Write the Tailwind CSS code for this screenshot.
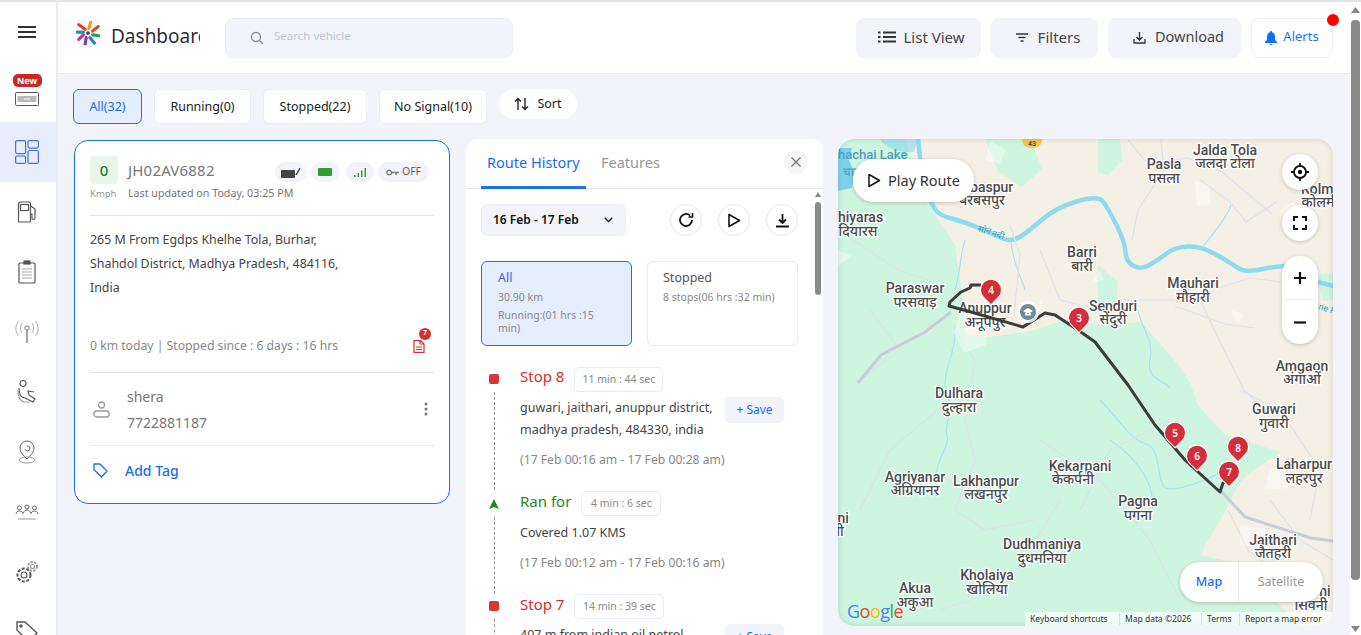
<!DOCTYPE html>
<html lang="en">
  <head>
    <meta charset="UTF-8" />
    <meta name="viewport" content="width=device-width, initial-scale=1.0" />
    <title>Dashboard</title>
    <script src="https://cdn.jsdelivr.net/npm/@tailwindcss/browser@4"></script>
  </head>
  <body class="relative h-[635px] w-[1361px] overflow-hidden bg-white font-['Noto_Sans',sans-serif] text-[#333]">
    <div class="flex h-[635px] border-t-2 border-[#e4e4e4]">
      <!-- Sidebar -->
      <aside class="flex w-[58px] shrink-0 flex-col overflow-hidden border-r-2 border-[#e9ebf2] bg-white">
        <div class="flex h-[60px] shrink-0 items-center justify-center pr-[2px]">
          <svg width="18" height="12" viewBox="0 0 18 12" fill="none" stroke="#333" stroke-width="1.800"><path d="M0 1h18M0 6h18M0 11h18"/></svg>
        </div>
        <div class="flex h-[60px] shrink-0 flex-col items-center pr-[2px]">
          <span class="mt-[12px] flex h-[13px] w-[29px] items-center justify-center rounded-[5px] bg-[#c62828] text-[9px] font-bold text-white">New</span>
          <svg class="mt-[5px]" width="24" height="14" viewBox="0 0 24 14" fill="none" stroke="#555"><rect x=".5" y=".5" width="23" height="13" rx="1"/><rect x="2.500" y="4" width="19" height="6" fill="#bbb" stroke="none"/><path d="M9 7h6" stroke="#fff"/></svg>
        </div>
        <div class="flex h-[60px] shrink-0 items-center justify-center bg-[#e8edfc] pr-[2px]">
          <svg width="24" height="24" viewBox="0 0 24 24" fill="none" stroke="#4a6fe0" stroke-width="1.200"><rect x=".6" y=".6" width="10" height="13" rx="1.500"/><rect x="13" y=".6" width="10.400" height="7.500" rx="1.500"/><rect x=".6" y="16" width="10" height="7.400" rx="1.500"/><rect x="13" y="10.500" width="10.400" height="12.900" rx="1.500"/></svg>
        </div>
        <div class="flex h-[60px] shrink-0 items-center justify-center pr-[2px]">
          <svg width="20" height="22" viewBox="0 0 20 22" fill="none" stroke="#555" stroke-width="1.200"><path d="M1.500 21V3a2 2 0 0 1 2-2h8a2 2 0 0 1 2 2v18z"/><rect x="3.500" y="3.500" width="8" height="6"/><path d="M14 5l4 3v9a1.500 1.500 0 0 1-3 0v-4h-1.500"/></svg>
        </div>
        <div class="flex h-[60px] shrink-0 items-center justify-center pr-[2px]">
          <svg width="18" height="24" viewBox="0 0 18 24" fill="none" stroke="#555" stroke-width="1.200"><rect x="1" y="3" width="16" height="20" rx="1"/><rect x="6" y="1" width="6" height="3" fill="#555"/><path d="M4 9h10M4 12h10M4 15h10M4 18h10" stroke="#aaa"/></svg>
        </div>
        <div class="flex h-[60px] shrink-0 items-center justify-center pr-[2px]">
          <svg width="24" height="24" viewBox="0 0 24 24" fill="none" stroke="#777" stroke-width="1"><circle cx="12" cy="8" r="2.200"/><path d="M12 10v13" stroke-width="1.300"/><path d="M7 3c-2 3-2 7 0 10M17 3c2 3 2 7 0 10M3.500 1c-3.500 5-3.500 10 0 15M20.500 1c3.500 5 3.500 10 0 15" stroke="#aaa"/></svg>
        </div>
        <div class="flex h-[60px] shrink-0 items-center justify-center pr-[2px]">
          <svg width="20" height="24" viewBox="0 0 20 24" fill="none" stroke="#555" stroke-width="1.200"><circle cx="6" cy="3.500" r="3"/><path d="M2 8c0 6 2 10 6 10l8 4 2-3-6-4-1-4 6 1"/><path d="M1 10c0 7 2 11 6 12h6" stroke="#999"/></svg>
        </div>
        <div class="flex h-[60px] shrink-0 items-center justify-center pr-[2px]">
          <svg width="18" height="24" viewBox="0 0 18 24" fill="none" stroke="#666" stroke-width="1"><path d="M9 19C5 15 2 12 2 8a7 7 0 0 1 14 0c0 4-3 7-7 11z"/><path d="M7 9a2.500 2.500 0 1 0 2-3"/><ellipse cx="9" cy="20" rx="8" ry="3" stroke="#999"/></svg>
        </div>
        <div class="flex h-[60px] shrink-0 items-center justify-center pr-[2px]">
          <svg width="24" height="16" viewBox="0 0 24 16" fill="none" stroke="#666" stroke-width="1"><circle cx="4.500" cy="4" r="2"/><circle cx="12" cy="3" r="2"/><circle cx="19.500" cy="4" r="2"/><path d="M1 10c0-2 2-3 3.500-3S8 8 8 10M8.500 9c0-2 2-3 3.500-3s3.500 1 3.500 3M16 10c0-2 2-3 3.500-3S23 8 23 10"/><path d="M3 15h18" stroke="#999"/></svg>
        </div>
        <div class="flex h-[60px] shrink-0 items-center justify-center pr-[2px]">
          <svg width="24" height="24" viewBox="0 0 24 24" fill="none" stroke="#555" stroke-width="1.100"><circle cx="9" cy="15" r="3"/><circle cx="9" cy="15" r="6.500" stroke-dasharray="3 1.600" stroke-width="2"/><circle cx="17.500" cy="6.500" r="2" stroke="#999"/><circle cx="17.500" cy="6.500" r="4.500" stroke="#999" stroke-dasharray="2.500 1.200" stroke-width="1.800"/></svg>
        </div>
        <div class="flex h-[60px] shrink-0 items-center justify-center pr-[2px]">
          <svg width="22" height="22" viewBox="0 0 22 22" fill="none" stroke="#555" stroke-width="1.400"><path d="M1 3V1h8l12 11-8 9L1 9z" stroke-linejoin="round"/><circle cx="5" cy="5" r="1"/></svg>
        </div>
      </aside>

      <!-- Main -->
      <main class="flex h-[633px] w-[1292px] shrink-0 flex-col overflow-hidden bg-[#f2f4fa]">
        <header class="relative flex h-[72px] shrink-0 items-center border-b border-[#e9ebf2] bg-white">
          <div class="ml-[15px] flex h-[30px] w-[30px] -translate-y-[5px] items-center justify-center rounded-full bg-[#fafafa]">
            <svg width="24" height="24" viewBox="-13 -13 26 26" fill="none" stroke-width="3.400" stroke-linecap="round">
              <path d="M-3-4L-10-9" stroke="#e63b2e"/><path d="M1-5L3-12" stroke="#f39c12"/><path d="M5-2L11-7" stroke="#d84a3a"/><path d="M5 2L12 3" stroke="#2e9e5b"/><path d="M2 5L7 11" stroke="#2b7fc4"/><path d="M-2 5L-3 12" stroke="#7b3fa0"/><path d="M-5 2L-10 7" stroke="#c2398f"/><path d="M-5-1L-12-1" stroke="#1f8fb5"/><circle r="2" fill="#444" stroke="none"/>
            </svg>
          </div>
          <div class="ml-[8px] w-[89px] -translate-y-px overflow-hidden whitespace-nowrap text-[19px] text-[#2b2f38]">Dashboard</div>
          <div class="ml-[25px] flex h-[40px] w-[288px] items-center rounded-[8px] border border-[#eceef5] bg-[#f2f4f9]">
            <svg class="ml-[24px]" width="14" height="14" viewBox="0 0 14 14" fill="none" stroke="#8b8f98" stroke-width="1.400"><circle cx="6" cy="6" r="4.500"/><path d="M9.500 9.500L13 13"/></svg>
            <span class="ml-[10px] -translate-y-[2px] text-[11.500px] text-[#c3c6ce]">Search vehicle</span>
          </div>
          <div class="ml-[343px] flex h-[40px] w-[125px] items-center justify-center gap-[7px] rounded-[8px] bg-[#f2f4f9] pb-[1px] pl-[6px] text-[15px] text-[#444]">
            <svg width="18" height="12" viewBox="0 0 18 12" fill="none" stroke="#333" stroke-width="2"><path d="M0 1.500h2.500M5 1.500h13M0 6h2.500M5 6h13M0 10.500h2.500M5 10.500h13"/></svg>List View
          </div>
          <div class="ml-[10px] flex h-[40px] w-[107px] items-center justify-center gap-[9px] rounded-[8px] bg-[#f2f4f9] pb-[1px] pl-[6px] text-[15px] text-[#444]">
            <svg width="14" height="9" viewBox="0 0 14 9" fill="none" stroke="#333" stroke-width="1.400"><path d="M1 1h12M3.500 4.500h7M5.500 8h3"/></svg>Filters
          </div>
          <div class="ml-[10px] flex h-[40px] w-[133px] items-center justify-center gap-[9px] rounded-[8px] bg-[#f2f4f9] pb-[1px] pl-[8px] text-[14.500px] text-[#444]">
            <svg width="13" height="13" viewBox="0 0 13 13" fill="none" stroke="#333" stroke-width="1.300"><path d="M6.500 1v7.500M3.500 6l3 3 3-3M1 8v4h11V8"/></svg>Download
          </div>
          <div class="ml-[10px] flex h-[40px] w-[82px] items-center justify-center gap-[6px] rounded-[8px] border border-[#eceef5] bg-white text-[13px] text-[#1a73f0]">
            <svg width="12" height="14" viewBox="0 0 12 14" fill="#0d6efd"><path d="M6 0a1 1 0 0 1 1 1.200C9 1.700 10 3.500 10 6v3l2 2v1H0v-1l2-2V6c0-2.500 1-4.300 3-4.800A1 1 0 0 1 6 0zM4.500 13h3a1.500 1 0 0 1-3 0z"/></svg><span class="-translate-y-px">Alerts</span>
          </div>
          <span class="absolute left-[1267px] top-[10px] h-[16px] w-[16px] rounded-full border-[2px] border-white bg-[#ff0000]"></span>
        </header>

        <div class="ml-[15px] mt-[15px] flex h-[35px] shrink-0 items-start gap-[12px] text-[12.500px]">
          <div class="flex h-[35px] w-[69px] items-center justify-center rounded-[6px] border border-[#1a73e8] bg-[#e5eefc] pt-px text-[#1a6cf0]">All(32)</div>
          <div class="flex h-[35px] w-[97px] items-center justify-center rounded-[6px] border border-[#eceef5] bg-white pt-px text-[#222]">Running(0)</div>
          <div class="flex h-[35px] w-[104px] items-center justify-center rounded-[6px] border border-[#eceef5] bg-white pt-px text-[#222]">Stopped(22)</div>
          <div class="flex h-[35px] w-[108px] items-center justify-center rounded-[6px] border border-[#eceef5] bg-white pt-px text-[#222]">No Signal(10)</div>
          <div class="flex h-[30px] w-[78px] items-center justify-center gap-[8px] rounded-[15px] bg-white text-[#222]">
            <svg width="15" height="14" viewBox="0 0 15 14" fill="none" stroke="#222" stroke-width="1.400"><path d="M4 13V1.500M1 4.500l3-3 3 3M11 1v11.500M8 9.500l3 3 3-3"/></svg>Sort
          </div>
        </div>

        <div class="ml-[16px] mt-[15px] flex min-h-0 flex-1 items-start">
          <!-- Vehicle card -->
          <section class="mt-[1px] h-[364px] w-[376px] shrink-0 rounded-[14px] border border-[#1a73e8] bg-white px-[15px] pt-[15px]">
            <div class="flex h-[60px] border-b border-[#e4e4e4]">
              <div class="flex w-[38px] shrink-0 flex-col">
                <div class="flex h-[28px] w-[28px] items-center justify-center rounded-[3px] bg-[#e8f5e9] text-[15px] font-medium text-[#2e7d32]">0</div>
                <div class="mt-[3px] text-[9.500px] text-[#999]">Kmph</div>
              </div>
              <div class="flex w-[147px] shrink-0 flex-col">
                <div class="h-[28px] text-[15px] leading-[28px] tracking-[.2px] text-[#777]">JH02AV6882</div>
                <div class="mt-[1px] whitespace-nowrap text-[10.700px] text-[#777]">Last updated on Today, 03:25 PM</div>
              </div>
              <div class="mt-[6px] flex h-[20px] items-center text-[10.500px] text-[#666]">
                <div class="flex h-[20px] w-[32px] items-center justify-center rounded-full bg-[#f2f4f9]"><svg width="20" height="11" viewBox="0 0 20 11" fill="none"><rect y="3" width="14" height="8" rx="1" fill="#444"/><path d="M15 8l4-7" stroke="#444" stroke-width="1.500"/></svg></div>
                <div class="ml-[4px] flex h-[20px] w-[28px] items-center justify-center rounded-full bg-[#f2f4f9]"><svg width="15" height="8" viewBox="0 0 15 8"><rect width="14" height="8" rx="1" fill="#2e9e2e"/></svg></div>
                <div class="ml-[7px] flex h-[20px] w-[28px] items-center justify-center rounded-full bg-[#f2f4f9]"><svg width="13" height="9" viewBox="0 0 13 9" fill="#3c9a3c"><rect y="7" width="1.500" height="2"/><rect x="3.500" y="5" width="1.500" height="4"/><rect x="7" y="2.500" width="1.500" height="6.500"/><rect x="10.500" width="1.500" height="9"/></svg></div>
                <div class="ml-[4px] flex h-[20px] w-[51px] items-center justify-center gap-[3px] rounded-full bg-[#f2f4f9]"><svg width="13" height="7" viewBox="0 0 13 7" fill="none" stroke="#777" stroke-width="1.300"><circle cx="3.200" cy="3.500" r="2.300"/><path d="M5.500 3.500H13M10 3.500V6"/></svg>OFF</div>
              </div>
            </div>
            <div class="mt-[12px] text-[12.400px] leading-[24px] text-[#444]">265 M From Egdps Khelhe Tola, Burhar,<br />Shahdol District, Madhya Pradesh, 484116,<br />India</div>
            <div class="mt-[36px] flex h-[20px] items-center justify-between text-[12.200px] text-[#888]">
              <span>0 km today | Stopped since : 6 days : 16 hrs</span>
              <span class="relative mr-[9px]">
                <svg class="block" width="12" height="13" viewBox="0 0 12 13" fill="none" stroke="#d32f2f" stroke-width="1.200"><path d="M1 .6h6.500L11 4v8.400H1zM3 7h6M3 9.500h6M7 .6V4h4"/></svg>
                <span class="absolute left-[6px] top-[-12px] flex h-[12px] w-[12px] items-center justify-center rounded-full bg-[#d32f2f] text-[7px] font-bold text-white">7</span>
              </span>
            </div>
            <div class="mt-[16px] flex h-[74px] items-center border-y border-t-[#e4e4e4] border-b-[#e8ebf5]">
              <svg class="ml-[3px]" width="17" height="17" viewBox="0 0 17 17" fill="none" stroke="#999" stroke-width="1.300"><circle cx="8.500" cy="4" r="3"/><rect x=".8" y="10" width="15.400" height="6" rx="3"/></svg>
              <div class="ml-[17px] pt-[2px] text-[14px] leading-[26px] text-[#777]">shera<br />7722881187</div>
              <svg class="ml-auto mr-[6px]" width="4" height="14" viewBox="0 0 4 14" fill="#777"><circle cx="2" cy="2" r="1.500"/><circle cx="2" cy="7" r="1.500"/><circle cx="2" cy="12" r="1.500"/></svg>
            </div>
            <div class="mt-[12px] flex h-[24px] items-center text-[14px] font-medium text-[#1a6cf0]">
              <svg class="ml-[3px]" width="15" height="15" viewBox="0 0 15 15" fill="none" stroke="#1a6cf0" stroke-width="1.300"><path d="M1 1h6l7 7-5.500 6L1 6.500z" stroke-linejoin="round"/></svg>
              <span class="ml-[17px]">Add Tag</span>
            </div>
          </section>

          <!-- Route panel -->
          <section class="relative ml-[16px] h-[497px] w-[357px] shrink-0 overflow-hidden rounded-t-[12px] bg-white">
            <div class="relative flex h-[50px] border-b border-[#e6e6ea] pl-[15px]">
              <div class="h-[50px] w-[105px] border-b-[3px] border-[#1a73e8] pl-[6px] text-[14.500px] leading-[47px] text-[#1a6cf0]">Route History</div>
              <div class="ml-[15px] text-[14.500px] leading-[47px] text-[#999]">Features</div>
              <div class="absolute left-[318px] top-[11px] flex h-[24px] w-[24px] items-center justify-center rounded-full bg-[#f5f5f7]">
                <svg width="10" height="10" viewBox="0 0 10 10" stroke="#777" stroke-width="1.400"><path d="M.5.5l9 9M9.500.5l-9 9"/></svg>
              </div>
            </div>
            <div class="px-[15px]">
              <div class="mt-[15px] flex items-center">
                <div class="flex h-[32px] w-[145px] items-center justify-between rounded-[6px] border border-[#eceef5] bg-[#f2f4f9] pl-[11px] pr-[12px] text-[12px] font-semibold text-[#111]">16 Feb - 17 Feb<svg width="9" height="6" viewBox="0 0 9 6" fill="none" stroke="#222" stroke-width="1.400"><path d="M.7.7L4.500 4.500 8.300.7"/></svg></div>
                <div class="ml-[44px] flex h-[32px] w-[32px] items-center justify-center rounded-full border border-[#e5e5e5]"><svg width="16" height="16" viewBox="0 0 16 16" fill="none" stroke="#111" stroke-width="1.800"><path d="M14 8a6 6 0 1 1-2-4.500"/><path d="M14.500 1v4h-4" stroke-width="1.600"/></svg></div>
                <div class="ml-[16px] flex h-[32px] w-[32px] items-center justify-center rounded-full border border-[#e5e5e5]"><svg width="14" height="15" viewBox="0 0 14 15" fill="none" stroke="#111" stroke-width="1.600"><path d="M2 1.500v12l10.500-6z" stroke-linejoin="round"/></svg></div>
                <div class="ml-[16px] flex h-[32px] w-[32px] items-center justify-center rounded-full border border-[#e5e5e5]"><svg width="15" height="15" viewBox="0 0 15 15" fill="none" stroke="#111" stroke-width="1.800"><path d="M7.500 1v8.500M4 6.500l3.500 3.500L11 6.500M1 13.500h13"/></svg></div>
              </div>
              <div class="mt-[25px] flex gap-[15px]">
                <div class="h-[85px] w-[151px] rounded-[6px] border border-[#1a73e8] bg-[#e5eefc] pl-[16px] pt-[6px] text-[10.500px] leading-[13px] text-[#888]">
                  <div class="text-[12.500px] leading-[20px] text-[#4a5ce0]">All</div>
                  <div class="leading-[18px]">30.90 km</div>
                  <div class="mt-[3px]">Running:(01 hrs :15<br />min)</div>
                </div>
                <div class="h-[85px] w-[151px] rounded-[6px] border border-[#e8ebf5] bg-white pl-[15px] pt-[6px] text-[10.500px] text-[#888]">
                  <div class="text-[12.500px] leading-[20px] text-[#555]">Stopped</div>
                  <div class="whitespace-nowrap leading-[18px]">8 stops(06 hrs :32 min)</div>
                </div>
              </div>

              <div class="mt-[21px]">
                <div class="flex">
                  <div class="flex w-[26px] shrink-0 flex-col items-center">
                    <span class="mt-[7px] h-[10px] w-[10px] rounded-[2px] bg-[#d63838]"></span>
                    <span class="mb-[1px] mt-[8px] flex-1 border-l border-dashed border-[#999]"></span>
                  </div>
                  <div class="ml-[13px] flex-1 pb-[21px]">
                    <div class="flex h-[25px] items-center gap-[10px]">
                      <span class="-translate-y-[3px] text-[15px] text-[#d32f2f]">Stop 8</span>
                      <span class="flex h-[25px] w-[89px] items-center justify-center rounded-[5px] border border-[#e8ebf5] text-[10.500px] text-[#888]">11 min : 44 sec</span>
                    </div>
                    <div class="mt-[5px] flex items-start justify-between pr-[24px]">
                      <div class="text-[12.500px] leading-[22px] text-[#444]">guwari, jaithari, anuppur district,<br />madhya pradesh, 484330, india</div>
                      <span class="flex h-[26px] w-[59px] shrink-0 items-center justify-center rounded-[5px] bg-[#f2f4f9] text-[12px] text-[#1a6cf0]">+ Save</span>
                    </div>
                    <div class="mt-[9px] text-[12.200px] leading-[20px] text-[#888]">(17 Feb 00:16 am - 17 Feb 00:28 am)</div>
                  </div>
                </div>
                <div class="flex">
                  <div class="flex w-[26px] shrink-0 flex-col items-center">
                    <svg class="mt-[8px]" width="10" height="10" viewBox="0 0 10 10" fill="#1e8a1e"><path d="M5 0l5 10-5-2-5 2z"/></svg>
                    <span class="mt-[8px] flex-1 border-l border-dashed border-[#999]"></span>
                  </div>
                  <div class="ml-[13px] flex-1 pb-[21px]">
                    <div class="flex h-[25px] items-center gap-[10px]">
                      <span class="-translate-y-[2px] text-[15px] text-[#1e8a1e]">Ran for</span>
                      <span class="flex h-[25px] w-[80px] items-center justify-center rounded-[5px] border border-[#e8ebf5] text-[10.500px] text-[#888]">4 min : 6 sec</span>
                    </div>
                    <div class="mt-[6px] text-[12.500px] leading-[22px] text-[#444]">Covered 1.07 KMS</div>
                    <div class="mt-[9px] text-[12.200px] leading-[20px] text-[#888]">(17 Feb 00:12 am - 17 Feb 00:16 am)</div>
                  </div>
                </div>
                <div class="flex">
                  <div class="flex w-[26px] shrink-0 flex-col items-center">
                    <span class="mt-[7px] h-[10px] w-[10px] rounded-[2px] bg-[#d63838]"></span>
                    <span class="mt-[8px] h-[40px] border-l border-dashed border-[#999]"></span>
                  </div>
                  <div class="ml-[13px] flex-1">
                    <div class="flex h-[25px] items-center gap-[10px]">
                      <span class="-translate-y-[2px] text-[15px] text-[#d32f2f]">Stop 7</span>
                      <span class="flex h-[25px] w-[90px] items-center justify-center rounded-[5px] border border-[#e8ebf5] text-[10.500px] text-[#888]">14 min : 39 sec</span>
                    </div>
                    <div class="mt-[5px] flex items-start justify-between pr-[24px]">
                      <div class="text-[12.500px] leading-[22px] text-[#444]">407 m from indian oil petrol</div>
                      <span class="flex h-[26px] w-[59px] shrink-0 items-center justify-center rounded-[5px] bg-[#f2f4f9] text-[12px] text-[#1a6cf0]">+ Save</span>
                    </div>
                  </div>
                </div>
              </div>
            </div>
            <!-- panel scrollbar -->
            <div class="absolute left-[349px] top-[51px] h-[446px] w-[8px] bg-white">
              <svg class="absolute left-0 top-[2px]" width="6" height="5" viewBox="0 0 6 5" fill="#888"><path d="M3 0l3 5H0z"/></svg>
              <div class="absolute left-0 top-[12px] h-[93px] w-[6px] rounded-full bg-[#8a8a8a]"></div>
            </div>
          </section>

          <!-- Map canvas -->
          <section class="relative ml-[15px] h-[487px] w-[495px] shrink-0 overflow-hidden rounded-[16px] bg-[#f5f0e5]">
            <svg class="absolute inset-0" width="495" height="487" viewBox="838 139 495 487">
              <rect x="838" y="139" width="495" height="487" fill="#f5f0e5"/>
              <path d="M838 139H905L925 200 955 245 961 285 965 335 990 337 1035 330 1070 318 1098 325 1141 322 1181 368 1191 385 1198 405 1225 435 1281 452 1251 472 1238 485 1225 512 1205 545 1201 555 1230 562 1280 605 1300 626H838z" fill="#cdf5e0"/>
              <path d="M985 139h45l12 30-20 18-24-16z" fill="#cdf5e0"/>
              <path d="M1098 139h22l2 22-14 14-10-2z" fill="#cdf5e0"/>
              <path d="M1098 265l20 17-2 22-18 11z" fill="#cdf5e0"/>
              <path d="M1318 275l15-3v28l-10 1z" fill="#cdf5e0"/>
              <!-- lake and rivers -->
              <path d="M838 148h14l-3 12 6 14-3 14-14 3z" fill="#7dd3ec"/>
              <path d="M880 139c6 10 20 14 34 13l4-13z" fill="#7dd3ec" opacity=".5"/>
              <path d="M918 139L921 165 920 183Q931 202 934.500 208.500Q938 215 951.500 218.500Q965 222 980 228.500Q995 235 1003 238.500Q1011 242 1019.500 237Q1028 232 1041.500 220Q1055 208 1076.500 201.500Q1098 195 1103 201.500Q1108 208 1116.500 225Q1125 242 1125.500 252Q1126 262 1133.500 266Q1141 270 1149.500 265Q1158 260 1166.500 253.500Q1175 247 1188 246.500Q1201 246 1216 254.500Q1231 263 1238 268Q1245 273 1263 269Q1281 265 1300 266M1318 282l15 4" fill="none" stroke="#8fdbee" stroke-width="4.500" stroke-linecap="round"/>
              <g fill="none" stroke="#a8e2f2" stroke-width="1.200">
                <path d="M1011 242c2 20 8 30 14 48M965 240c-6 20-4 30-10 50M1231 205c-4 14-20 30-28 42M1138 310c4 20 16 30 12 50s14 20 20 28"/>
                <path d="M955 325c2 30-16 50-8 70s-4 30 0 40-14 30-10 44M1110 440c30 20 50 50 40 80M1100 400c20 20 30 40 46 44s10 40 20 44 50-10 60-20"/>
              </g>
              <!-- minor roads -->
              <g fill="none" stroke="#dde2ea" stroke-width="1.200">
                <path d="M1160 130l4 40-26 40-6 30M1200 180l30 22 16 20 30-20M1120 300h60l70-22 80 10M1200 300l24 50 20 40 30 30M1128 140l20 24 40-6 34 14 50 42M1175 306l50 18 30 4M1010 225l10 30-6 60M1040 250l20 50 40 10"/>
                <path d="M838 230l60 40 30 10M870 310l30 40-40 30M955 330l20 30-10 60 10 40-20 50 30 20 50-10M950 400l-60 50-30 60M1040 440l60 40 50 60 30 60M1060 500l-30 50-30 40-60 20M1170 420l-60 30-30 60M1240 390l40 20 40 60-10 50M1270 500l30 40 33 20M1228 510l20 40 50 40"/>
              </g>
              <!-- settlements -->
              <g fill="#fff" opacity=".4">
                <path d="M990 140l16 10-6 14-14-4z"/><path d="M1195 180l14 6 2 18-14 2zM1280 210l14-8 8 14-16 10zM1230 310l14 4-6 10zM960 305l30 4-4 36-22 8-10-20zM1100 270l4 10-14 4zM1040 300l6 8-10 4zM1270 470l30 4-10 14-26 2zM1240 525l40 6-10 20-30-6zM838 250l14 6-14 10z"/>
              </g>
              <!-- highways -->
              <path d="M858 383l23-28 44-23 26-20" fill="none" stroke="#c5cdd9" stroke-width="3"/>
              <path d="M1220 490l25 27 66 21 22 3" fill="none" stroke="#c5cdd9" stroke-width="3"/>
              <path d="M1022 139c0 6 4 9 10 9s10-3 10-9z" fill="#f3c94b"/>
              <!-- labels -->
              <g transform="translate(0,-1)" class="font-[Roboto,'Noto_Sans',sans-serif] text-[14px] font-medium fill-[#4b4b4b] stroke-white stroke-[2.500px] [paint-order:stroke]" text-anchor="middle">
                <text x="1225" y="156">Jalda Tola</text><text x="1225" y="169">जलदा टोला</text>
                <text x="1164" y="170">Pasla</text><text x="1164" y="184">पसला</text>
                <text x="981" y="193">Barbaspur</text><text x="982" y="206">बरबसपुर</text>
                <text x="856" y="223">Dhiyaras</text><text x="858" y="237">दियारस</text>
                <text x="915" y="294">Paraswar</text><text x="915" y="308">परसवाड़</text>
                <text x="985" y="314">Anuppur</text><text x="985" y="328">अनूपपुर</text>
                <text x="1082" y="258">Barri</text><text x="1082" y="272">बारी</text>
                <text x="1113" y="312">Senduri</text><text x="1113" y="325">सेंदुरी</text>
                <text x="1193" y="289">Mauhari</text><text x="1193" y="303">मौहारी</text>
                <text x="1302" y="372">Amgaon</text><text x="1302" y="385">अंगाओं</text>
                <text x="1319" y="195">Kolmi</text><text x="1320" y="208">कोलमी</text>
                <text x="1274" y="415">Guwari</text><text x="1274" y="429">गुवारी</text>
                <text x="1304" y="470">Laharpur</text><text x="1304" y="484">लहरपुर</text>
                <text x="1273" y="546">Jaithari</text><text x="1273" y="559">जैतहरी</text>
                <text x="959" y="399">Dulhara</text><text x="959" y="413">दुल्हारा</text>
                <text x="915" y="483">Agriyanar</text><text x="915" y="496">अग्रियानर</text>
                <text x="986" y="487">Lakhanpur</text><text x="986" y="500">लखनपुर</text>
                <text x="1080" y="472">Kekarpani</text><text x="1073" y="485">केकर्पनी</text>
                <text x="1138" y="507">Pagna</text><text x="1138" y="521">पगना</text>
                <text x="1042" y="550">Dudhmaniya</text><text x="1042" y="564">दुधमनिया</text>
                <text x="987" y="581">Kholaiya</text><text x="987" y="595">खोलिया</text>
                <text x="915" y="594">Akua</text><text x="915" y="608">अकुआ</text>
                <text x="835" y="524">Rani</text><text x="838" y="537">नी</text>
                <text x="1313" y="597">Seoni</text><text x="1311" y="611">सिवनी</text>
              </g>
              <text x="838" y="159" class="font-[Roboto,sans-serif] text-[13px] font-medium fill-[#4aa0bf]">hachai Lake</text>
              <text x="843" y="176" class="font-[Roboto,sans-serif] text-[12px] fill-[#4aa0bf]">चाच</text>
              <text x="977" y="231" transform="rotate(18 977 231)" class="font-[Roboto,sans-serif] text-[9px] fill-[#3a9cc0]">सोन नदी</text>
              <text x="1318" y="309" transform="rotate(18 1318 309)" class="font-[Roboto,sans-serif] text-[9px] fill-[#3a9cc0]">ne R</text>
              <text x="1032" y="146" text-anchor="middle" class="font-[Roboto,sans-serif] text-[7px] font-bold fill-[#555]">43</text>
              <!-- route -->
              <path d="M981 285H971L970 288 961 292 950 302 949 306 971 312 1023 327 1045 313 1055 315 1078 330 1095 342 1128 385 1155 425 1185 460 1220 492 1223 483 1228 480" fill="none" stroke="#3c3c3c" stroke-width="3" stroke-linejoin="round"/>
              <circle cx="1028" cy="312" r="11" fill="#fff" opacity=".8"/><circle cx="1028" cy="312" r="8" fill="#6f8a9a"/>
              <path d="M1023 311l5-3 5 3-5 3zM1025 313v2.500h6V313" fill="#fff"/>
              <!-- pins -->
              <g fill="#d32f3a" stroke="#fff" stroke-width="2" class="[paint-order:stroke]">
                <path d="M991 304l-7-7a10 10 0 1 1 14 0z"/>
                <path d="M1079 332l-7-7a10 10 0 1 1 14 0z"/>
                <path d="M1175 447l-7-7a10 10 0 1 1 14 0z"/>
                <path d="M1197 470l-7-7a10 10 0 1 1 14 0z"/>
                <path d="M1238 461l-7-7a10 10 0 1 1 14 0z"/>
                <path d="M1229 486l-7-7a10 10 0 1 1 14 0z"/>
              </g>
              <g class="font-['Noto_Sans',sans-serif] text-[10px] font-semibold fill-white" text-anchor="middle">
                <text x="991" y="294">4</text><text x="1079" y="322">3</text><text x="1175" y="437">5</text><text x="1197" y="460">6</text><text x="1238" y="452">8</text><text x="1229" y="476">7</text>
              </g>
            </svg>
            <div class="pointer-events-none absolute inset-0 rounded-[16px] shadow-[inset_0_0_6px_rgba(0,0,0,.12)]"></div>

            <!-- Play route, controls -->
            <div class="absolute left-[15px] top-[20px] flex h-[43px] w-[121px] items-center justify-center gap-[7px] rounded-[21px] bg-white text-[14.500px] text-[#333] shadow-[0_1px_4px_rgba(0,0,0,.2)]">
              <svg width="14" height="15" viewBox="0 0 14 15" fill="none" stroke="#111" stroke-width="1.500"><path d="M2 1.500v12l10.500-6z" stroke-linejoin="round"/></svg><span class="whitespace-nowrap">Play Route</span>
            </div>
            <div class="absolute left-[444px] top-[15px] flex h-[36px] w-[36px] items-center justify-center rounded-full bg-white shadow-[0_1px_4px_rgba(0,0,0,.2)]">
              <svg width="18" height="18" viewBox="0 0 18 18" fill="none" stroke="#111" stroke-width="1.800"><circle cx="9" cy="9" r="6"/><circle cx="9" cy="9" r="2.200" fill="#111" stroke="none"/><path d="M9 0v3M9 15v3M0 9h3M15 9h3"/></svg>
            </div>
            <div class="absolute left-[444px] top-[66px] flex h-[36px] w-[36px] items-center justify-center rounded-full bg-white shadow-[0_1px_4px_rgba(0,0,0,.2)]">
              <svg width="14" height="14" viewBox="0 0 14 14" fill="none" stroke="#111" stroke-width="2"><path d="M1 5V1h4M9 1h4v4M13 9v4H9M5 13H1V9"/></svg>
            </div>
            <div class="absolute left-[444px] top-[117px] flex h-[88px] w-[36px] flex-col items-center rounded-full bg-white shadow-[0_1px_4px_rgba(0,0,0,.2)]">
              <div class="flex h-[44px] w-[30px] items-center justify-center border-b border-[#eeeeee]"><svg width="14" height="14" viewBox="0 0 14 14" stroke="#111" stroke-width="2.200"><path d="M7 1v12M1 7h12"/></svg></div>
              <div class="flex h-[44px] items-center justify-center"><svg width="14" height="3" viewBox="0 0 14 3" stroke="#111" stroke-width="2.200"><path d="M1 1.500h12"/></svg></div>
            </div>
            <div class="absolute left-[342px] top-[423px] flex h-[40px] w-[143px] items-center rounded-[20px] bg-white text-[12.500px] shadow-[0_1px_4px_rgba(0,0,0,.2)]">
              <div class="flex h-[40px] w-[59px] items-center justify-center border-r border-[#e8e8e8] font-medium text-[#1a6cf0]">Map</div>
              <div class="flex-1 text-center text-[#999]">Satellite</div>
            </div>
            <div class="absolute bottom-[3px] left-[9px] font-['Open_Sans',sans-serif] text-[18px] font-medium leading-[24px] tracking-[-.5px]">
              <span class="text-[#4285f4]">G</span><span class="text-[#ea4335]">o</span><span class="text-[#fbbc05]">o</span><span class="text-[#4285f4]">g</span><span class="text-[#34a853]">l</span><span class="text-[#ea4335]">e</span>
            </div>
            <div class="absolute bottom-0 left-[187px] flex h-[14px] w-[308px] items-center whitespace-nowrap bg-white/70 text-[8.500px] text-[#333]">
              <span class="w-[94px] pl-[5px]">Keyboard shortcuts</span>
              <span class="w-[82px] border-l border-[#ddd] pl-[5px]">Map data ©2026</span>
              <span class="w-[38px] border-l border-[#ddd] pl-[5px]">Terms</span>
              <span class="border-l border-[#ddd] pl-[5px]">Report a map error</span>
            </div>
          </section>
        </div>
      </main>
    </div>

    <!-- Page scrollbar -->
    <div class="absolute right-0 top-[2px] h-[633px] w-[11px] bg-white">
      <svg class="absolute left-[1px] top-[5px]" width="9" height="6" viewBox="0 0 9 6" fill="#888"><path d="M4.500 0L9 6H0z"/></svg>
      <div class="absolute left-[1px] top-[18px] h-[560px] w-[9px] rounded-[4px] bg-[#8a8a8a]"></div>
      <svg class="absolute bottom-[3px] left-[1px]" width="9" height="6" viewBox="0 0 9 6" fill="#888"><path d="M4.500 6L9 0H0z"/></svg>
    </div>
  </body>
</html>
